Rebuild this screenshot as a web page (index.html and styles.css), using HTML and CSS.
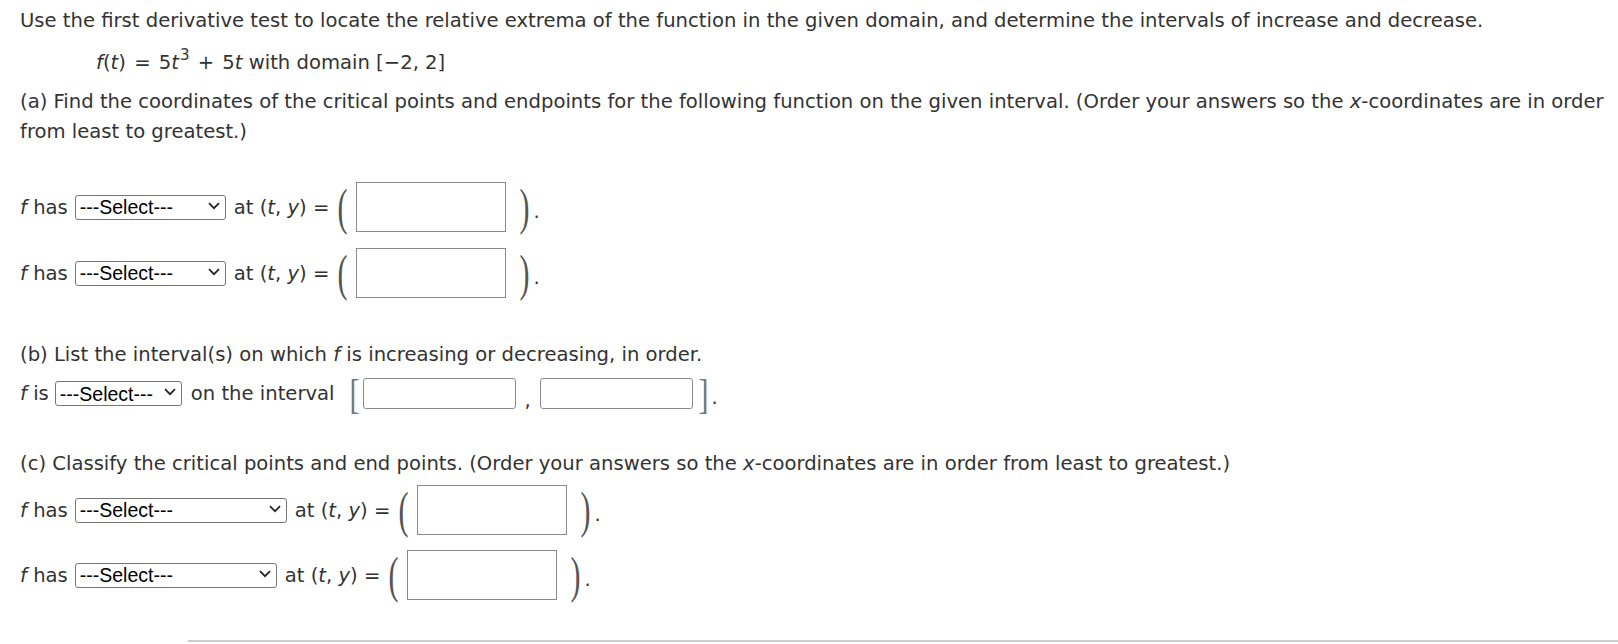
FILE: index.html
```html
<!DOCTYPE html>
<html>
<head>
<meta charset="utf-8">
<link rel="stylesheet" href="styles.css">
</head>
<body>
<div class="page">
  <p class="intro">Use the first derivative test to locate the relative extrema of the function in the given domain, and determine the intervals of increase and decrease.</p>
  <p class="formula"><i>f</i>(<i>t</i>)<span class="op">=</span>5<i>t</i><sup>3</sup><span class="op">+</span>5<i>t</i> with domain [−2, 2]</p>
  <p class="part">(a) Find the coordinates of the critical points and endpoints for the following function on the given interval. (Order your answers so the <i>x</i>-coordinates are in order<br>from least to greatest.)</p>

  <div class="row row-a1">
    <span class="lbl"><i>f</i> has</span>
    <span class="selwrap"><select class="sel sel-a"><option>---Select---</option></select><svg class="chev" width="12" height="8" viewBox="0 0 12 8"><path d="M1 1.2 L6 6.2 L11 1.2" fill="none" stroke="#222" stroke-width="1.7"/></svg></span>
    <span class="lbl at">at (<i>t</i>, <i>y</i>) =</span>
    <span class="paren">(</span>
    <input class="box" type="text">
    <span class="paren paren-r">)</span><span class="dot">.</span>
  </div>

  <div class="row row-a2">
    <span class="lbl"><i>f</i> has</span>
    <span class="selwrap"><select class="sel sel-a"><option>---Select---</option></select><svg class="chev" width="12" height="8" viewBox="0 0 12 8"><path d="M1 1.2 L6 6.2 L11 1.2" fill="none" stroke="#222" stroke-width="1.7"/></svg></span>
    <span class="lbl at">at (<i>t</i>, <i>y</i>) =</span>
    <span class="paren">(</span>
    <input class="box" type="text">
    <span class="paren paren-r">)</span><span class="dot">.</span>
  </div>

  <p class="part part-b">(b) List the interval(s) on which <i>f</i> is increasing or decreasing, in order.</p>
  <div class="row row-b">
    <span class="lbl"><i>f</i> is</span>
    <span class="selwrap sw-b"><select class="sel sel-b"><option>---Select---</option></select><svg class="chev" width="12" height="8" viewBox="0 0 12 8"><path d="M1 1.2 L6 6.2 L11 1.2" fill="none" stroke="#222" stroke-width="1.7"/></svg></span>
    <span class="lbl on">on the interval</span>
    <span class="bracket">[</span>
    <input class="box box-b" type="text">
    <span class="comma">,</span>
    <input class="box box-b" type="text">
    <span class="bracket bracket-r">]</span><span class="dot">.</span>
  </div>

  <p class="part part-c">(c) Classify the critical points and end points. (Order your answers so the <i>x</i>-coordinates are in order from least to greatest.)</p>
  <div class="row row-c1">
    <span class="lbl"><i>f</i> has</span>
    <span class="selwrap"><select class="sel sel-c1"><option>---Select---</option></select><svg class="chev" width="12" height="8" viewBox="0 0 12 8"><path d="M1 1.2 L6 6.2 L11 1.2" fill="none" stroke="#222" stroke-width="1.7"/></svg></span>
    <span class="lbl at">at (<i>t</i>, <i>y</i>) =</span>
    <span class="paren">(</span>
    <input class="box" type="text">
    <span class="paren paren-r">)</span><span class="dot">.</span>
  </div>
  <div class="row row-c2">
    <span class="lbl"><i>f</i> has</span>
    <span class="selwrap"><select class="sel sel-c2"><option>---Select---</option></select><svg class="chev" width="12" height="8" viewBox="0 0 12 8"><path d="M1 1.2 L6 6.2 L11 1.2" fill="none" stroke="#222" stroke-width="1.7"/></svg></span>
    <span class="lbl at">at (<i>t</i>, <i>y</i>) =</span>
    <span class="paren">(</span>
    <input class="box" type="text">
    <span class="paren paren-r">)</span><span class="dot">.</span>
  </div>

  <div class="rule"></div>
</div>
</body>
</html>
```

FILE: styles.css
```css
html, body {
  margin: 0;
  padding: 0;
  background: #fff;
}

.page {
  padding: 0 0 0 20px;
  font-family: "DejaVu Sans", Verdana, sans-serif;
  font-size: 19.6px;
  color: #333;
}

p {
  margin: 0;
  line-height: 30px;
  white-space: nowrap;
}

.intro {
  padding-top: 6px;
}

.formula {
  margin-top: 12px;
  padding-left: 76px;
}

.op {
  padding: 0 0.42em;
}

.formula sup {
  font-size: 15px;
  line-height: 0;
  vertical-align: 9px;
  margin-left: 1px;
}

.part {
  margin-top: 9px;
}

.part-b {
  margin-top: 42px;
}

.part-c {
  margin-top: 40px;
}

.row {
  display: flex;
  align-items: center;
  height: 50px;
}

.row-a1 { margin-top: 35px; }
.row-a2 { margin-top: 16px; }
.row-b { margin-top: 8px; height: 31px; }
.row-c1 { margin-top: 6px; }
.row-c2 { margin-top: 15px; }

.lbl {
  white-space: pre;
}

.at {
  margin-left: 8px;
}

.on {
  margin-left: 9px;
}

.selwrap {
  position: relative;
  display: inline-flex;
  margin-left: 7px;
}

.sw-b {
  margin-left: 6px;
}

.sel {
  -webkit-appearance: none;
  appearance: none;
  font-family: "Liberation Sans", Arial, sans-serif;
  font-size: 19.5px;
  height: 25px;
  box-sizing: border-box;
  margin: 0;
  border: 1px solid #767676;
  border-radius: 3px;
  background: #fff;
  color: #000;
  padding: 0 0 0 4px;
}

.chev {
  position: absolute;
  right: 6px;
  top: 7px;
  pointer-events: none;
}

.sel-a { width: 151px; }
.sel-b { width: 127px; }
.sel-c1 { width: 212px; }
.sel-c2 { width: 202px; }

.box {
  width: 150px;
  height: 50px;
  box-sizing: border-box;
  border: 1px solid #8a8a8a;
  border-radius: 0;
  margin: 0 0 0 8px;
  padding: 0;
  background: #fff;
}

.box-b {
  width: 153px;
  height: 31px;
  border-radius: 3px;
  margin-left: 3px;
}

.paren {
  display: inline-block;
  width: 12px;
  text-align: center;
  font-family: "Liberation Serif", serif;
  font-size: 30px;
  line-height: 30px;
  color: #555;
  transform: scaleY(1.7);
  margin-left: 7px;
}

.paren-r {
  margin-left: 12px;
}

.bracket {
  display: inline-block;
  width: 10px;
  text-align: center;
  font-family: "Liberation Serif", serif;
  font-size: 30px;
  line-height: 30px;
  color: #777;
  transform: scaleY(1.4);
  margin-left: 15px;
}

.bracket-r {
  margin-left: 6px;
}

.comma {
  margin: 0 0 0 9px;
  padding-top: 14px;
  width: 12px;
}

.dot {
  padding-top: 8px;
  margin-left: 3px;
}

.rule {
  margin: 40px 0 0 168px;
  border-top: 2px solid #ccc;
}
```
